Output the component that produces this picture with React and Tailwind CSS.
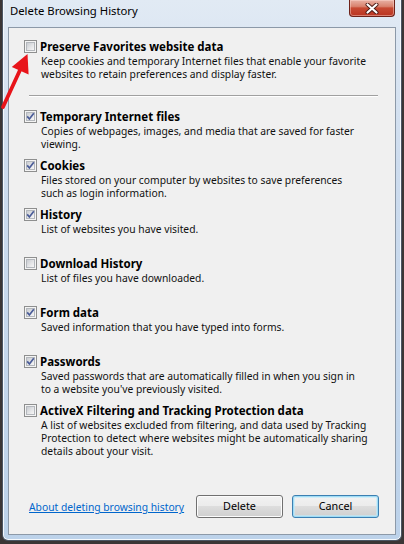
import React from 'react';

/* ─── data ─────────────────────────────────────────────────────────────── */
const items = [
  {
    title: 'Temporary Internet files',
    checked: true,
    lines: ['Copies of webpages, images, and media that are saved for faster', 'viewing.'],
  },
  {
    title: 'Cookies',
    checked: true,
    lines: ['Files stored on your computer by websites to save preferences', 'such as login information.'],
  },
  { title: 'History', checked: true, lines: ['List of websites you have visited.'] },
  { title: 'Download History', checked: false, lines: ['List of files you have downloaded.'] },
  { title: 'Form data', checked: true, lines: ['Saved information that you have typed into forms.'] },
  {
    title: 'Passwords',
    checked: true,
    lines: [
      'Saved passwords that are automatically filled in when you sign in',
      "to a website you've previously visited.",
    ],
  },
  {
    title: 'ActiveX Filtering and Tracking Protection data',
    checked: false,
    lines: [
      'A list of websites excluded from filtering, and data used by Tracking',
      'Protection to detect where websites might be automatically sharing',
      'details about your visit.',
    ],
  },
];

/* ─── Checkbox ─────────────────────────────────────────────────────────── */
const CheckBox = ({ checked }) => (
  <span className="relative mt-[2px] flex h-[13px] w-[13px] shrink-0 border border-[#8e8f8f] bg-[#f4f4f4] p-[1px]">
    <span className="flex-1 border border-[#b4b8bd] bg-[linear-gradient(135deg,#c9ccd1_0%,#e4e5e7_55%,#f7f7f7_100%)]" />
    {checked && (
      <svg className="absolute left-[-1px] top-[-1px]" width="13" height="13" viewBox="0 0 13 13">
        <path d="M3.2 6.4 L5.4 9 L9.8 3.2" fill="none" stroke="#4a5c98" strokeWidth="1.7" />
      </svg>
    )}
  </span>
);

/* ─── Option row ───────────────────────────────────────────────────────── */
const Option = ({ title, checked, lines, className = '' }) => (
  <div className={`flex gap-[3px] pl-[15px] ${className}`}>
    <CheckBox checked={checked} />
    <div className="flex flex-col">
      <div className="whitespace-nowrap text-[11.5px] font-bold leading-[17px] text-black">{title}</div>
      <div className="ml-[1px] text-[10.3px] leading-[13px] text-[#111]">
        {lines.map((l) => (
          <div key={l} className="whitespace-nowrap">
            {l}
          </div>
        ))}
      </div>
    </div>
  </div>
);

/* ─── Buttons ──────────────────────────────────────────────────────────── */
const Button = ({ children, primary }) => (
  <button
    className={`flex h-[23px] w-[87px] items-center justify-center rounded-[3px] border bg-[linear-gradient(#f2f2f2_0%,#ebebeb_50%,#dddddd_50%,#cfcfcf_100%)] text-[10.8px] text-black ${
      primary
        ? 'border-[#3c7fb1] shadow-[inset_0_0_0_1px_#9fdcf6,inset_0_0_0_2px_rgba(190,235,252,0.6)]'
        : 'border-[#707070] shadow-[inset_0_0_0_1px_#fcfcfc]'
    }`}
  >
    {children}
  </button>
);

const CloseButton = () => (
  <div className="flex h-[17px] w-[46px] items-center justify-center rounded-b-[4px] border border-t-0 border-[#6e2219] bg-[linear-gradient(#e8b1a4_0%,#d9836f_40%,#c74a33_50%,#b93421_100%)] shadow-[inset_0_0_0_1px_rgba(255,220,210,0.45)]">
    <svg width="14" height="11" viewBox="0 0 14 11">
      <path d="M2.5 1.5 L11.5 9.5 M11.5 1.5 L2.5 9.5" stroke="#4a1a14" strokeWidth="4" strokeLinecap="round" />
      <path d="M2.5 1.5 L11.5 9.5 M11.5 1.5 L2.5 9.5" stroke="#ffffff" strokeWidth="2.2" strokeLinecap="round" />
    </svg>
  </div>
);

/* ─── Annotation arrow ─────────────────────────────────────────────────── */
const RedArrow = () => (
  <svg className="absolute left-0 top-[50px]" width="36" height="62" viewBox="0 0 36 62">
    <path d="M3 57 L20.5 19" stroke="#e8141a" strokeWidth="3.8" strokeLinecap="round" />
    <polygon points="27.5,4 11.8,17 28.6,24.5" fill="#e8141a" />
  </svg>
);

/* ─── App ──────────────────────────────────────────────────────────────── */
export default function App() {
  return (
    <div className="relative h-[544px] w-[404px] overflow-hidden bg-[#3b3636] font-['Noto_Sans',sans-serif]">
      <div className="ml-[2px] flex h-[541px] w-[400px] flex-col rounded-b-[6px] border border-t-0 border-[#4b5664] bg-[linear-gradient(180deg,#e1eaf4_0%,#cddcee_30%,#bcd2ea_100%)] shadow-[inset_1px_0_0_#f4f8fc,inset_-1px_0_0_#f4f8fc,inset_0_-1px_0_#f4f8fc]">
        {/* title bar */}
        <div className="flex h-[27px] items-start justify-between pl-[7px] pr-[6px]">
          <span className="pt-[3px] text-[11.3px] leading-[16px] text-black">Delete Browsing History</span>
          <CloseButton />
        </div>

        {/* client area */}
        <div className="mx-[5px] mb-[5px] flex flex-1 flex-col border border-[#8c99a8] bg-[#f0f0f0] pt-[10px]">
          <Option
            title="Preserve Favorites website data"
            checked={false}
            lines={[
              'Keep cookies and temporary Internet files that enable your favorite',
              'websites to retain preferences and display faster.',
            ]}
          />
          <div className="ml-[20px] mt-[14px] h-[2px] w-[349px] border-t border-[#a0a0a0] bg-white" />
          <div className="mt-[11px] flex flex-col">
            {items.map((it) => (
              <Option key={it.title} {...it} className="h-[49px]" />
            ))}
          </div>

          <div className="mt-[44px] flex items-center pl-[20px] pr-[16px]">
            <a className="mt-[3px] text-[10.3px] text-[#0066cc] underline" href="#">
              About deleting browsing history
            </a>
            <div className="ml-auto flex gap-[9px]">
              <Button>Delete</Button>
              <Button primary>Cancel</Button>
            </div>
          </div>
        </div>
      </div>
      <RedArrow />
    </div>
  );
}
